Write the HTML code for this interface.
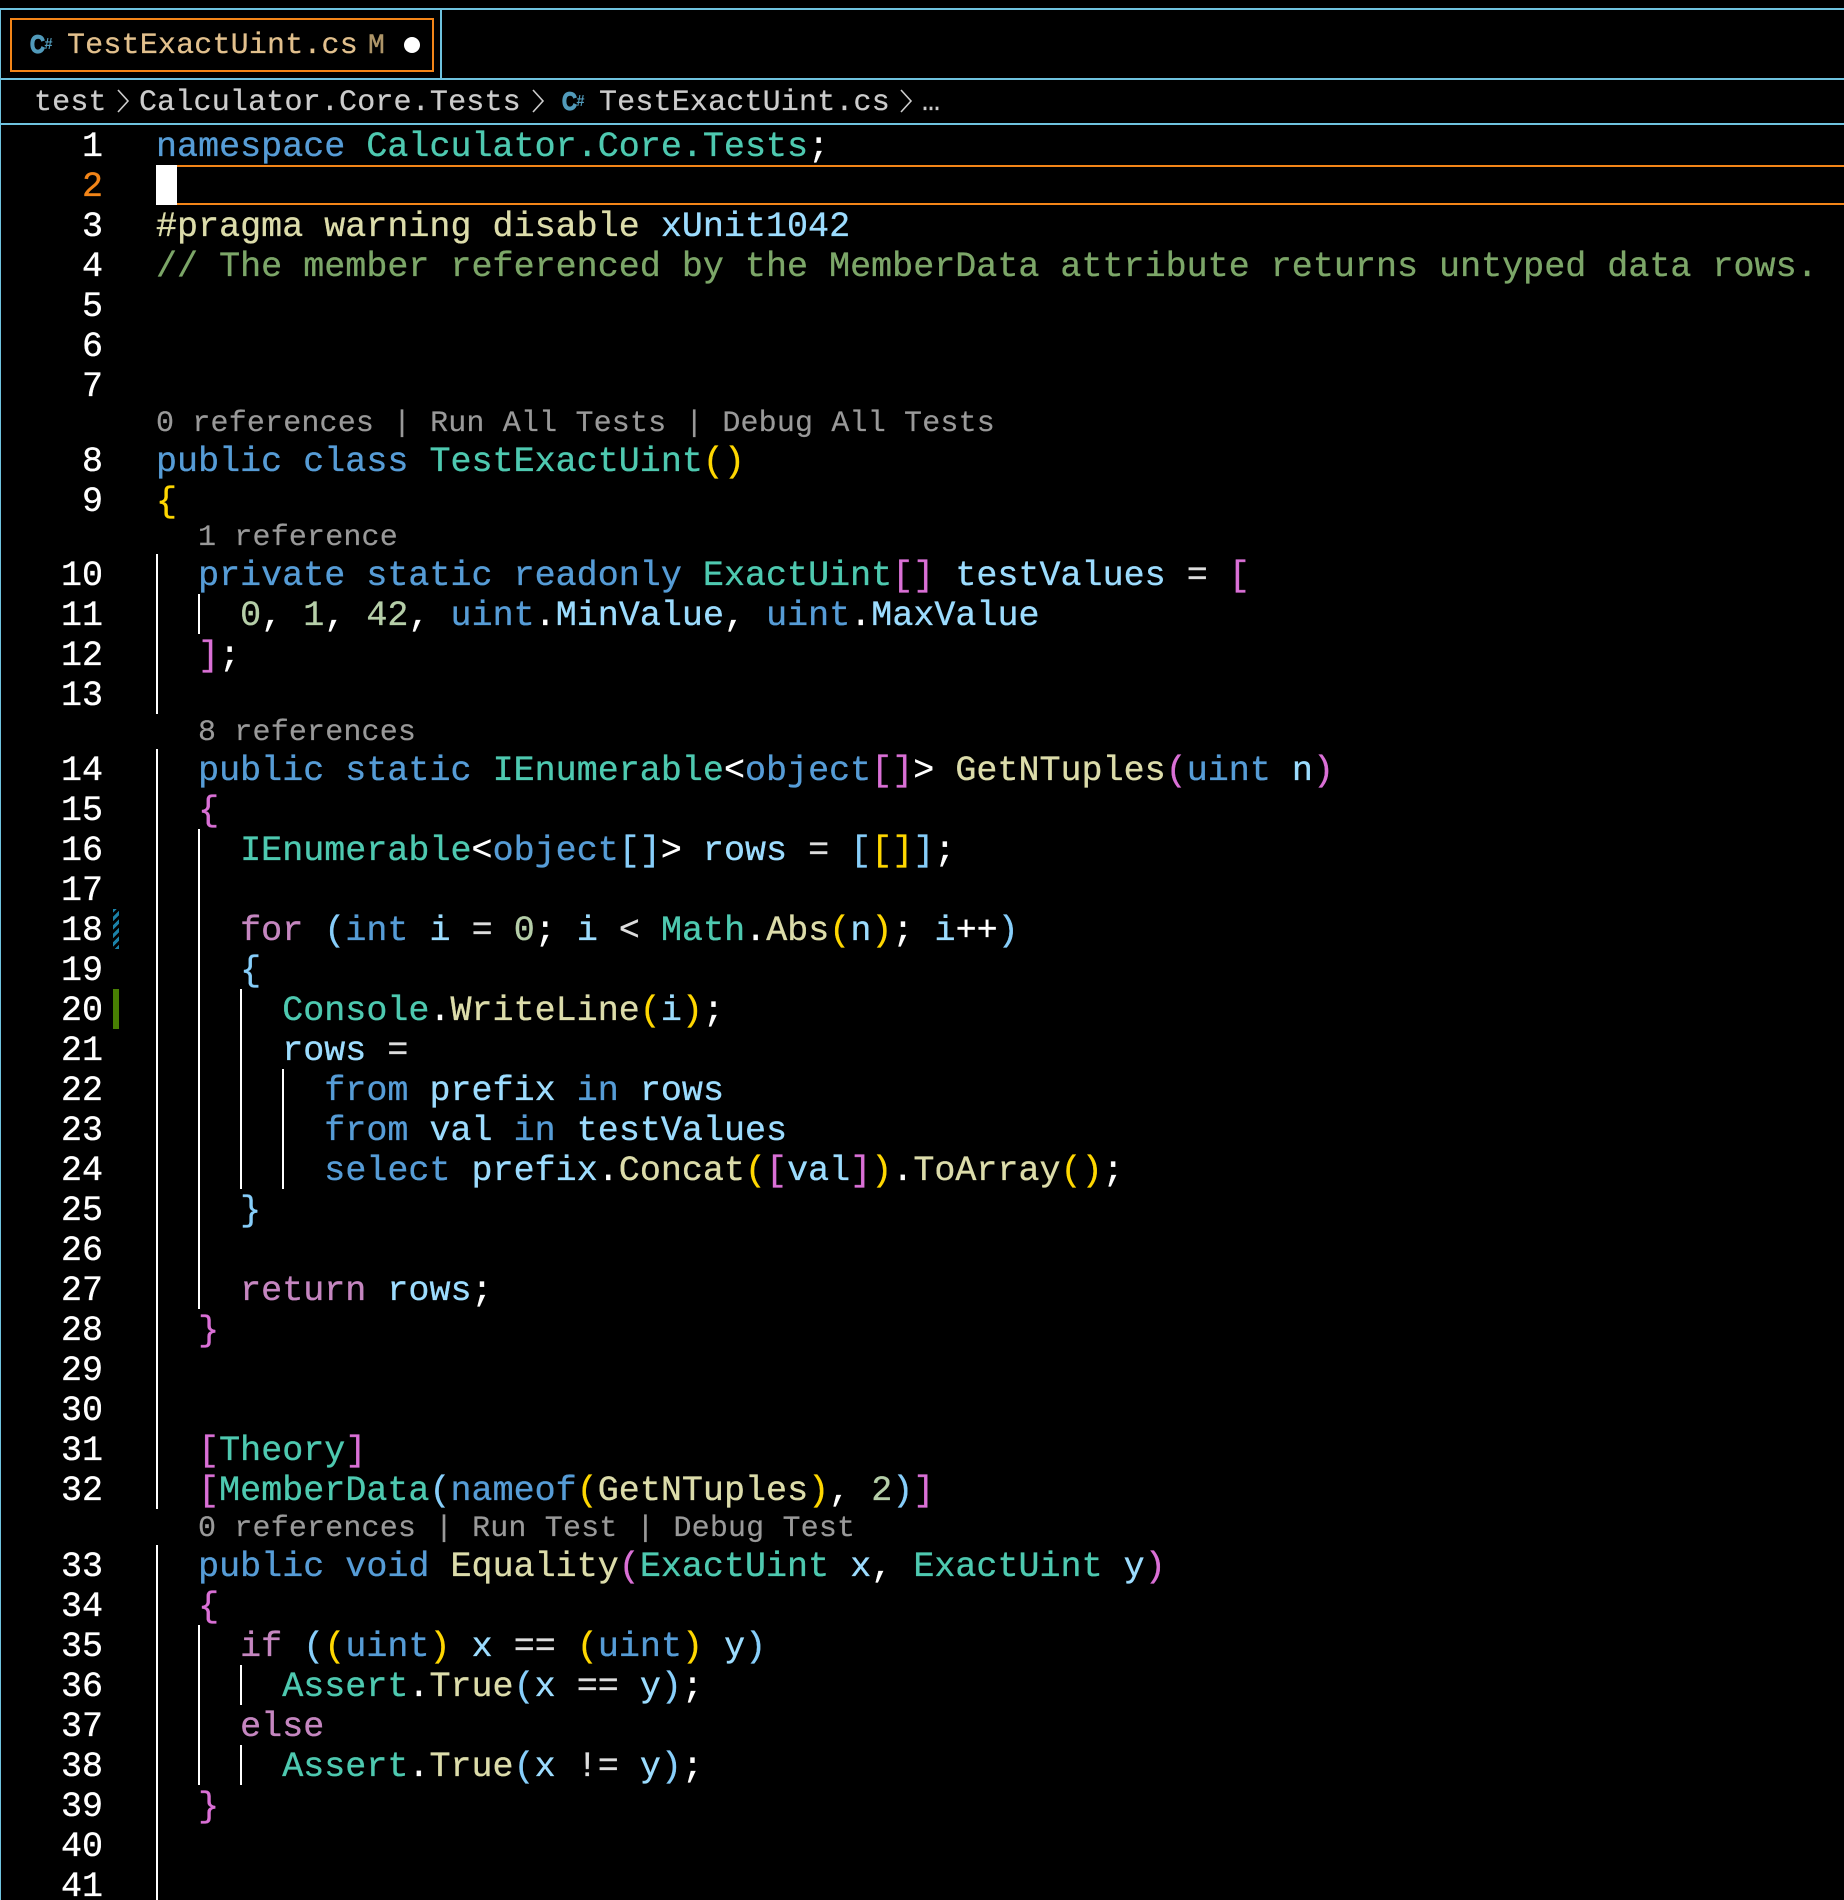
<!DOCTYPE html>
<html><head><meta charset="utf-8"><style>
html,body{margin:0;padding:0;background:#000;width:1844px;height:1900px;overflow:hidden}
#r{position:relative;width:1844px;height:1900px;background:#000;overflow:hidden;font-family:"Liberation Mono",monospace;color:#fff}
.a,.l,.n,.g,.z{position:absolute}
.h{position:absolute;left:0;width:1844px;height:2px;background:#6fc3df}
.l{left:156px;font-size:35px;line-height:40px;white-space:pre;margin-top:2px;letter-spacing:.03px;-webkit-text-stroke:.35px}
.n{left:40px;width:63px;text-align:right;font-size:35px;line-height:40px;margin-top:2px;-webkit-text-stroke:.35px}
.g{width:2px;background:#fff}
.z{font-size:30px;line-height:34px;color:#999;white-space:pre;margin-top:1px;letter-spacing:.17px;-webkit-text-stroke:.2px}
.z i{display:inline-block;width:56px;text-align:center;font-style:normal}
.t30{position:absolute;font-size:30px;line-height:40px;white-space:pre;letter-spacing:.18px;-webkit-text-stroke:.25px}
.k{color:#569cd6}.c{color:#c586c0}.t{color:#4ec9b0}.f{color:#dcdcaa}.v{color:#9cdcfe}.m{color:#b5cea8}.y{color:#ffd700}.p{color:#da70d6}.b{color:#87cefa}.o{color:#7ca668}.w{color:#ddd}
</style></head><body><div id="r">
<div class="a" style="left:0;top:9px;width:1px;height:1891px;background:#6fc3df"></div>
<div class="h" style="top:8px"></div>
<div class="h" style="top:78px"></div>
<div class="h" style="top:123px"></div>
<div class="a" style="left:440px;top:9px;width:2px;height:70px;background:#6fc3df"></div>
<div class="a" style="left:10px;top:18px;width:420px;height:50px;border:2px solid #f38518"></div>

<svg class="a" style="left:26px;top:30px" width="32" height="30"><text x="4" y="23" font-family="Liberation Sans" font-weight="bold" font-size="25" textLength="15" lengthAdjust="spacingAndGlyphs" fill="#519aba" stroke="#519aba" stroke-width="1.2">C</text><text x="18.5" y="19" font-family="Liberation Sans" font-weight="bold" font-size="16" textLength="8" lengthAdjust="spacingAndGlyphs" fill="#519aba">#</text></svg>
<div class="t30" style="left:67px;top:26px;color:#e2c08d">TestExactUint.cs</div>
<div class="a" style="left:368px;top:26.5px;font-size:28px;line-height:40px;color:#ae9568;-webkit-text-stroke:.4px">M</div>
<div class="a" style="left:404px;top:37px;width:16px;height:16px;border-radius:50%;background:#fff"></div>

<div class="t30" style="left:34px;top:83px;color:#ccc">test</div>
<svg class="a" style="left:115px;top:88px" width="18" height="26"><path d="M3 2 L13 13 L3 24" fill="none" stroke="#ccc" stroke-width="1.6"/></svg>
<div class="t30" style="left:139px;top:83px;color:#ccc">Calculator.Core.Tests</div>
<svg class="a" style="left:530px;top:88px" width="18" height="26"><path d="M3 2 L13 13 L3 24" fill="none" stroke="#ccc" stroke-width="1.6"/></svg>
<svg class="a" style="left:558px;top:87px" width="32" height="30"><text x="4" y="23" font-family="Liberation Sans" font-weight="bold" font-size="25" textLength="15" lengthAdjust="spacingAndGlyphs" fill="#519aba" stroke="#519aba" stroke-width="1.2">C</text><text x="18.5" y="19" font-family="Liberation Sans" font-weight="bold" font-size="16" textLength="8" lengthAdjust="spacingAndGlyphs" fill="#519aba">#</text></svg>
<div class="t30" style="left:599px;top:83px;color:#ccc">TestExactUint.cs</div>
<svg class="a" style="left:898px;top:88px" width="18" height="26"><path d="M3 2 L13 13 L3 24" fill="none" stroke="#ccc" stroke-width="1.6"/></svg>
<div class="t30" style="left:922px;top:83px;color:#ccc">…</div>

<div class="a" style="left:177px;top:165px;width:1667px;height:2px;background:#f38518"></div>
<div class="a" style="left:177px;top:203px;width:1667px;height:2px;background:#f38518"></div>
<div class="a" style="left:156px;top:165px;width:21px;height:40px;background:#fff"></div>

<div class="g" style="left:156px;top:554px;height:160px"></div>
<div class="g" style="left:156px;top:749px;height:760px"></div>
<div class="g" style="left:156px;top:1545px;height:355px"></div>
<div class="g" style="left:198px;top:594px;height:40px"></div>
<div class="g" style="left:198px;top:829px;height:480px"></div>
<div class="g" style="left:198px;top:1625px;height:160px"></div>
<div class="g" style="left:240px;top:989px;height:200px"></div>
<div class="g" style="left:240px;top:1665px;height:40px"></div>
<div class="g" style="left:240px;top:1745px;height:40px"></div>
<div class="g" style="left:282px;top:1069px;height:120px"></div>

<div class="a" style="left:113px;top:909px;width:6px;height:40px;background:repeating-linear-gradient(-45deg,#1b81a8 0,#1b81a8 3px,#000 3px,#000 6px)"></div>
<div class="a" style="left:113px;top:989px;width:6px;height:40px;background:#487e02"></div>

<div class="n" style="top:125px">1</div>
<div class="n" style="top:165px;color:#f38518">2</div>
<div class="n" style="top:205px">3</div>
<div class="n" style="top:245px">4</div>
<div class="n" style="top:285px">5</div>
<div class="n" style="top:325px">6</div>
<div class="n" style="top:365px">7</div>
<div class="n" style="top:440px">8</div>
<div class="n" style="top:480px">9</div>
<div class="n" style="top:554px">10</div>
<div class="n" style="top:594px">11</div>
<div class="n" style="top:634px">12</div>
<div class="n" style="top:674px">13</div>
<div class="n" style="top:749px">14</div>
<div class="n" style="top:789px">15</div>
<div class="n" style="top:829px">16</div>
<div class="n" style="top:869px">17</div>
<div class="n" style="top:909px">18</div>
<div class="n" style="top:949px">19</div>
<div class="n" style="top:989px">20</div>
<div class="n" style="top:1029px">21</div>
<div class="n" style="top:1069px">22</div>
<div class="n" style="top:1109px">23</div>
<div class="n" style="top:1149px">24</div>
<div class="n" style="top:1189px">25</div>
<div class="n" style="top:1229px">26</div>
<div class="n" style="top:1269px">27</div>
<div class="n" style="top:1309px">28</div>
<div class="n" style="top:1349px">29</div>
<div class="n" style="top:1389px">30</div>
<div class="n" style="top:1429px">31</div>
<div class="n" style="top:1469px">32</div>
<div class="n" style="top:1545px">33</div>
<div class="n" style="top:1585px">34</div>
<div class="n" style="top:1625px">35</div>
<div class="n" style="top:1665px">36</div>
<div class="n" style="top:1705px">37</div>
<div class="n" style="top:1745px">38</div>
<div class="n" style="top:1785px">39</div>
<div class="n" style="top:1825px">40</div>
<div class="n" style="top:1865px">41</div>

<div class="l" style="top:125px"><span class="k">namespace</span> <span class="t">Calculator.Core.Tests</span>;</div>
<div class="l" style="top:205px"><span class="f">#pragma warning disable</span> <span class="v">xUnit1042</span></div>
<div class="l o" style="top:245px">// The member referenced by the MemberData attribute returns untyped data rows.</div>
<div class="z" style="left:156px;top:406px">0 references<i>|</i>Run All Tests<i>|</i>Debug All Tests</div>
<div class="l" style="top:440px"><span class="k">public class</span> <span class="t">TestExactUint</span><span class="y">()</span></div>
<div class="l y" style="top:480px">{</div>
<div class="z" style="left:198px;top:520px">1 reference</div>
<div class="l" style="top:554px">  <span class="k">private static readonly</span> <span class="t">ExactUint</span><span class="p">[]</span> <span class="v">testValues</span> <span class="w">=</span> <span class="p">[</span></div>
<div class="l" style="top:594px">    <span class="m">0</span>, <span class="m">1</span>, <span class="m">42</span>, <span class="k">uint</span>.<span class="v">MinValue</span>, <span class="k">uint</span>.<span class="v">MaxValue</span></div>
<div class="l" style="top:634px">  <span class="p">]</span>;</div>
<div class="z" style="left:198px;top:715px">8 references</div>
<div class="l" style="top:749px">  <span class="k">public static</span> <span class="t">IEnumerable</span>&lt;<span class="k">object</span><span class="p">[]</span>&gt; <span class="f">GetNTuples</span><span class="p">(</span><span class="k">uint</span> <span class="v">n</span><span class="p">)</span></div>
<div class="l p" style="top:789px">  {</div>
<div class="l" style="top:829px">    <span class="t">IEnumerable</span>&lt;<span class="k">object</span><span class="b">[]</span>&gt; <span class="v">rows</span> <span class="w">=</span> <span class="b">[</span><span class="y">[]</span><span class="b">]</span>;</div>
<div class="l" style="top:909px">    <span class="c">for</span> <span class="b">(</span><span class="k">int</span> <span class="v">i</span> <span class="w">=</span> <span class="m">0</span>; <span class="v">i</span> <span class="w">&lt;</span> <span class="t">Math</span>.<span class="f">Abs</span><span class="y">(</span><span class="v">n</span><span class="y">)</span>; <span class="v">i</span>++<span class="b">)</span></div>
<div class="l b" style="top:949px">    {</div>
<div class="l" style="top:989px">      <span class="t">Console</span>.<span class="f">WriteLine</span><span class="y">(</span><span class="v">i</span><span class="y">)</span>;</div>
<div class="l" style="top:1029px">      <span class="v">rows</span> <span class="w">=</span></div>
<div class="l" style="top:1069px">        <span class="k">from</span> <span class="v">prefix</span> <span class="k">in</span> <span class="v">rows</span></div>
<div class="l" style="top:1109px">        <span class="k">from</span> <span class="v">val</span> <span class="k">in</span> <span class="v">testValues</span></div>
<div class="l" style="top:1149px">        <span class="k">select</span> <span class="v">prefix</span>.<span class="f">Concat</span><span class="y">(</span><span class="p">[</span><span class="v">val</span><span class="p">]</span><span class="y">)</span>.<span class="f">ToArray</span><span class="y">()</span>;</div>
<div class="l b" style="top:1189px">    }</div>
<div class="l" style="top:1269px">    <span class="c">return</span> <span class="v">rows</span>;</div>
<div class="l p" style="top:1309px">  }</div>
<div class="l" style="top:1429px">  <span class="p">[</span><span class="t">Theory</span><span class="p">]</span></div>
<div class="l" style="top:1469px">  <span class="p">[</span><span class="t">MemberData</span><span class="b">(</span><span class="k">nameof</span><span class="y">(</span><span class="f">GetNTuples</span><span class="y">)</span>, <span class="m">2</span><span class="b">)</span><span class="p">]</span></div>
<div class="z" style="left:198px;top:1511px">0 references<i>|</i>Run Test<i>|</i>Debug Test</div>
<div class="l" style="top:1545px">  <span class="k">public void</span> <span class="f">Equality</span><span class="p">(</span><span class="t">ExactUint</span> <span class="v">x</span>, <span class="t">ExactUint</span> <span class="v">y</span><span class="p">)</span></div>
<div class="l p" style="top:1585px">  {</div>
<div class="l" style="top:1625px">    <span class="c">if</span> <span class="b">(</span><span class="y">(</span><span class="k">uint</span><span class="y">)</span> <span class="v">x</span> <span class="w">==</span> <span class="y">(</span><span class="k">uint</span><span class="y">)</span> <span class="v">y</span><span class="b">)</span></div>
<div class="l" style="top:1665px">      <span class="t">Assert</span>.<span class="f">True</span><span class="b">(</span><span class="v">x</span> <span class="w">==</span> <span class="v">y</span><span class="b">)</span>;</div>
<div class="l" style="top:1705px">    <span class="c">else</span></div>
<div class="l" style="top:1745px">      <span class="t">Assert</span>.<span class="f">True</span><span class="b">(</span><span class="v">x</span> <span class="w">!=</span> <span class="v">y</span><span class="b">)</span>;</div>
<div class="l p" style="top:1785px">  }</div>
</div></body></html>
